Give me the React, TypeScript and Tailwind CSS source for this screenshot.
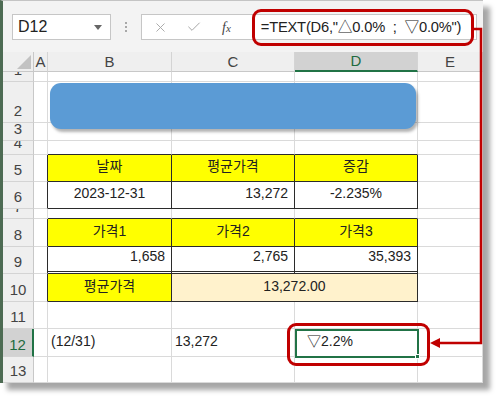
import { X, Check } from 'lucide-react';

// 엑셀 시트 모양: 열 너비 (A~E)
const colW = ['w-[14px]', 'w-[124px]', 'w-[123px]', 'w-[123px]', 'flex-1'];
const thin = 'border-r border-b border-[#dadada]';

type CellDef = { t?: string; a?: 'l' | 'c' | 'r'; cls?: string; w?: string };

const Cell = ({ c, col }: { c: CellDef; col: number }) => {
  const align = c.a === 'c' ? 'justify-center' : c.a === 'r' ? 'justify-end pr-[6px]' : 'justify-start pl-[3px]';
  return (
    <div className={`${c.w ?? colW[col]} h-full flex items-end pb-[4px] overflow-hidden whitespace-nowrap ${align} ${c.cls ?? thin}`}>
      {c.t}
    </div>
  );
};

const RowHead = ({ n, sel }: { n: number; sel?: boolean }) => (
  <div
    className={`w-[31px] h-full shrink-0 flex items-end justify-center pb-[2px] overflow-hidden border-b border-[#d4d4d4] text-[15px] leading-[18px] ${
      sel ? 'bg-[#d2d2d2] text-[#1e6b3f] border-r-2 border-r-[#217346]' : 'bg-[#efefef] text-[#444] border-r border-r-[#c8c8c8]'
    }`}
  >
    {n}
  </div>
);

const dark = 'border-r border-b border-[#2b2b2b]';
const yellow = `bg-[#ffff00] ${dark}`;
const white = `bg-white ${dark}`;
const aDark = 'border-r border-b border-r-[#2b2b2b] border-b-[#dadada]';
const topDark = 'border-r border-b border-r-[#dadada] border-b-[#2b2b2b]';
const dbl = 'bg-white border-r border-r-[#2b2b2b] border-b-[3px] border-double border-b-[#2b2b2b]';

const rows: { n: number; h: string; cells: CellDef[] }[] = [
  { n: 1, h: 'h-[10px]', cells: [{}, {}, {}, {}, {}] },
  { n: 2, h: 'h-[41px]', cells: [{}, {}, {}, {}, {}] },
  { n: 3, h: 'h-[18px]', cells: [{}, {}, {}, {}, {}] },
  { n: 4, h: 'h-[14px]', cells: [{}, { cls: topDark }, { cls: topDark }, { cls: topDark }, {}] },
  {
    n: 5,
    h: 'h-[27px]',
    cells: [{ cls: aDark }, { t: '날짜', a: 'c', cls: yellow }, { t: '평균가격', a: 'c', cls: yellow }, { t: '증감', a: 'c', cls: yellow }, {}],
  },
  {
    n: 6,
    h: 'h-[27px]',
    cells: [{ cls: aDark }, { t: '2023-12-31', a: 'c', cls: white }, { t: '13,272', a: 'r', cls: white }, { t: '-2.235%', a: 'c', cls: white }, {}],
  },
  { n: 7, h: 'h-[10px]', cells: [{}, { cls: topDark }, { cls: topDark }, { cls: topDark }, {}] },
  {
    n: 8,
    h: 'h-[28px]',
    cells: [{ cls: aDark }, { t: '가격1', a: 'c', cls: yellow }, { t: '가격2', a: 'c', cls: yellow }, { t: '가격3', a: 'c', cls: yellow }, {}],
  },
  {
    n: 9,
    h: 'h-[27px]',
    cells: [{ cls: aDark }, { t: '1,658', a: 'r', cls: dbl }, { t: '2,765', a: 'r', cls: dbl }, { t: '35,393', a: 'r', cls: dbl }, {}],
  },
  {
    n: 10,
    h: 'h-[28px]',
    cells: [{ cls: aDark }, { t: '평균가격', a: 'c', cls: yellow }, { t: '13,272.00', a: 'c', w: 'w-[246px]', cls: `bg-[#fff2cc] ${dark}` }, {}],
  },
  { n: 11, h: 'h-[27px]', cells: [{}, {}, {}, {}, {}] },
  { n: 12, h: 'h-[28px]', cells: [{}, { t: '(12/31)' }, { t: '13,272' }, {}, {}] },
  { n: 13, h: 'h-[26px]', cells: [{}, {}, {}, {}, {}] },
];

export default function App() {
  return (
    <div className="w-[500px] h-[398px] bg-white relative overflow-hidden font-['Liberation_Sans','Noto_Sans_CJK_KR',sans-serif] text-[14px] text-[#222]">
      {/* 창 */}
      <div className="w-[483px] h-[383px] border-l-[3px] border-l-[#4d6b53] border-t border-t-[#c4c4c4] bg-white shadow-[7px_7px_5px_rgba(0,0,0,0.35)] flex flex-col overflow-hidden">
        {/* 수식 입력줄 */}
        <div className="h-[51px] shrink-0 bg-[#f3f3f3] flex items-start pt-[13px] pl-[9px]">
          <div className="w-[99px] h-[26px] bg-white border border-[#c6c6c6] flex items-center justify-between pl-[5px] pr-[8px]">
            <span className="text-[16px] text-[#222]">D12</span>
            <svg width="8" height="5" viewBox="0 0 8 5">
              <path d="M0 0 H8 L4 5 Z" fill="#666" />
            </svg>
          </div>
          <div className="w-[30px] h-[26px] flex flex-col items-center justify-center gap-[2px]">
            <span className="w-[2px] h-[2px] bg-[#a8a8a8]" />
            <span className="w-[2px] h-[2px] bg-[#a8a8a8]" />
            <span className="w-[2px] h-[2px] bg-[#a8a8a8]" />
          </div>
          <div className="w-[336px] h-[26px] bg-white border border-[#c6c6c6] flex items-center">
            <X className="w-[15px] h-[15px] ml-[11px] text-[#a6a6a6]" strokeWidth={1.5} />
            <Check className="w-[16px] h-[16px] ml-[18px] text-[#a6a6a6]" strokeWidth={1.5} />
            <span className="ml-[20px] font-['Liberation_Serif',serif] italic text-[14px] text-[#444]">
              f<span className="text-[11px]">x</span>
            </span>
            <span className="ml-[30px] text-[14.7px] text-[#222] whitespace-pre tracking-[-0.2px]">=TEXT(D6,"△0.0%  ;  ▽0.0%")</span>
          </div>
        </div>

        {/* 열 머리글 */}
        <div className="h-[20px] shrink-0 flex text-[15px] leading-[18px] text-[#444]">
          <div className="w-[31px] h-full bg-[#efefef] border-r border-b border-[#c8c8c8] flex items-end justify-end pr-[2px] pb-[2px]">
            <svg width="14" height="14" viewBox="0 0 14 14">
              <path d="M14 0 V14 H0 Z" fill="#c2c2c2" />
            </svg>
          </div>
          {['A', 'B', 'C', 'D', 'E'].map((l, i) => (
            <div
              key={l}
              className={`${colW[i]} h-full flex items-center justify-center border-r border-[#d4d4d4] ${
                l === 'D' ? 'bg-[#d2d2d2] text-[#1e6b3f] border-b-2 border-b-[#217346]' : 'bg-[#efefef] border-b border-b-[#c8c8c8]'
              }`}
            >
              {l}
            </div>
          ))}
        </div>

        {/* 셀 */}
        {rows.map((r) => (
          <div key={r.n} className={`${r.h} shrink-0 flex`}>
            <RowHead n={r.n} sel={r.n === 12} />
            {r.cells.map((c, i) => (
              <Cell key={i} c={c} col={r.n === 10 && i === 3 ? 4 : i} />
            ))}
          </div>
        ))}
      </div>

      {/* 도형 */}
      <div className="absolute left-[50px] top-[83px] w-[366px] h-[46px] rounded-[11px] bg-[#5b9bd5] shadow-[2px_3px_3px_rgba(0,0,0,0.3)]" />

      {/* D12 선택 영역 */}
      <div className="absolute left-[295px] top-[329px] w-[124px] h-[29px] border-2 border-[#217346] flex items-end pb-[4px] pl-[10px] text-[14px]">
        ▽2.2%
        <span className="absolute right-[-3px] bottom-[-3px] w-[5px] h-[5px] bg-[#217346] border border-white" />
      </div>

      {/* 강조 표시 */}
      <div className="absolute left-[252px] top-[9px] w-[222px] h-[37px] rounded-[9px] border-[3px] border-[#c00000]" />
      <div className="absolute left-[287px] top-[323px] w-[143px] h-[43px] rounded-[9px] border-[3px] border-[#c00000]" />
      <svg className="absolute left-0 top-0" width="500" height="398" viewBox="0 0 500 398">
        <path d="M473 29 H481 V343 H437" fill="none" stroke="#c00000" strokeWidth="2.5" />
        <path d="M430 343 L440 338 L440 348 Z" fill="#c00000" />
      </svg>
    </div>
  );
}
